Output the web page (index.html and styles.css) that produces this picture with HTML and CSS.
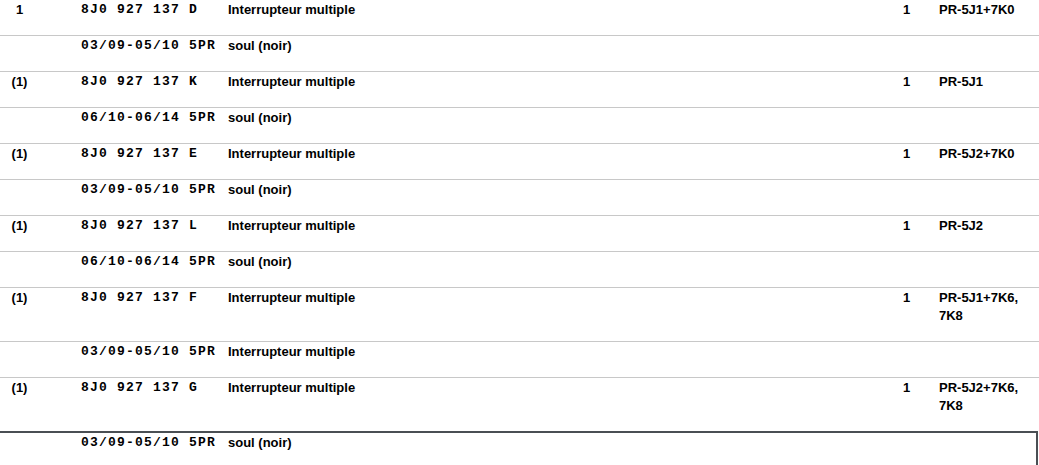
FILE: index.html
```html
<!DOCTYPE html>
<html lang="fr">
<head>
    <meta charset="UTF-8">
    <title>Pièces - Interrupteur multiple</title>
    <link rel="stylesheet" href="styles.css">
</head>
<body>

    <!-- Parts list -->
    <div class="parts">
        <div class="row">
            <div class="pos">1</div>
            <div class="code">8J0 927 137 D</div>
            <div class="name">Interrupteur multiple</div>
            <div class="qty">1</div>
            <div class="pr">PR-5J1+7K0</div>
        </div>
        <div class="row">
            <div class="pos"></div>
            <div class="code">03/09-05/10 5PR</div>
            <div class="name">soul (noir)</div>
            <div class="qty"></div>
            <div class="pr"></div>
        </div>

        <div class="row">
            <div class="pos">(1)</div>
            <div class="code">8J0 927 137 K</div>
            <div class="name">Interrupteur multiple</div>
            <div class="qty">1</div>
            <div class="pr">PR-5J1</div>
        </div>
        <div class="row">
            <div class="pos"></div>
            <div class="code">06/10-06/14 5PR</div>
            <div class="name">soul (noir)</div>
            <div class="qty"></div>
            <div class="pr"></div>
        </div>

        <div class="row">
            <div class="pos">(1)</div>
            <div class="code">8J0 927 137 E</div>
            <div class="name">Interrupteur multiple</div>
            <div class="qty">1</div>
            <div class="pr">PR-5J2+7K0</div>
        </div>
        <div class="row">
            <div class="pos"></div>
            <div class="code">03/09-05/10 5PR</div>
            <div class="name">soul (noir)</div>
            <div class="qty"></div>
            <div class="pr"></div>
        </div>

        <div class="row">
            <div class="pos">(1)</div>
            <div class="code">8J0 927 137 L</div>
            <div class="name">Interrupteur multiple</div>
            <div class="qty">1</div>
            <div class="pr">PR-5J2</div>
        </div>
        <div class="row">
            <div class="pos"></div>
            <div class="code">06/10-06/14 5PR</div>
            <div class="name">soul (noir)</div>
            <div class="qty"></div>
            <div class="pr"></div>
        </div>

        <div class="row">
            <div class="pos">(1)</div>
            <div class="code">8J0 927 137 F</div>
            <div class="name">Interrupteur multiple</div>
            <div class="qty">1</div>
            <div class="pr">PR-5J1+7K6,<br>7K8</div>
        </div>
        <div class="row">
            <div class="pos"></div>
            <div class="code">03/09-05/10 5PR</div>
            <div class="name">Interrupteur multiple</div>
            <div class="qty"></div>
            <div class="pr"></div>
        </div>

        <div class="row no-line">
            <div class="pos">(1)</div>
            <div class="code">8J0 927 137 G</div>
            <div class="name">Interrupteur multiple</div>
            <div class="qty">1</div>
            <div class="pr">PR-5J2+7K6,<br>7K8</div>
        </div>
        <div class="row selected">
            <div class="pos"></div>
            <div class="code">03/09-05/10 5PR</div>
            <div class="name">soul (noir)</div>
            <div class="qty"></div>
            <div class="pr"></div>
        </div>
    </div>

</body>
</html>
```

FILE: styles.css
```css
/* Global */
* {
    margin: 0;
    padding: 0;
    box-sizing: border-box;
}

body {
    font-family: "Liberation Sans", Arial, sans-serif;
    font-size: 13px;
    font-weight: bold;
    color: #000;
    background-color: #fff;
}

/* Parts list */
.parts {
    width: 1039px;
}

.row {
    display: grid;
    grid-template-columns: 81px 147px 675px 36px 1fr;
    line-height: 18px;
    padding-top: 1px;
    padding-bottom: 16px;
    border-bottom: 1px solid #c8c8c8;
}

.row.no-line {
    border-bottom: none;
}

/* last row sits in a dark frame */
.row.selected {
    width: 1038px;
    border-top: 2px solid #4a4f54;
    border-right: 2px solid #4a4f54;
    border-bottom: none;
}

.pos {
    width: 39px;
    text-align: center;
}

.code {
    font-family: "Liberation Mono", "Courier New", monospace;
    font-size: 13px;
    letter-spacing: 1.2px;
}
```
